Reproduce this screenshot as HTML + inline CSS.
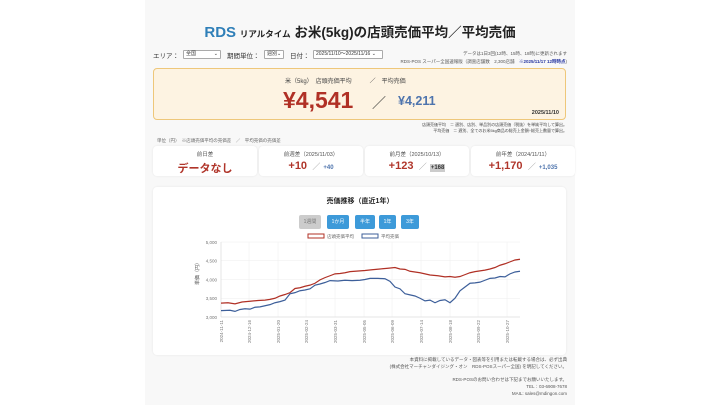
<!DOCTYPE html><html><head><meta charset="utf-8"><style>
*{margin:0;padding:0;box-sizing:border-box}
body{width:720px;height:405px;background:#fff;font-family:"Liberation Sans","Noto Sans CJK JP",sans-serif;position:relative;overflow:hidden;color:#333}
.col{position:absolute;left:145px;top:0;width:430px;height:405px;background:#f8f8f8}
.a{position:absolute;white-space:nowrap}
.sel{position:absolute;height:9px;border:1px solid #aaa;background:#fff;font-size:5px;line-height:7px;padding-left:2px;border-radius:1px}
.card{position:absolute;top:146px;width:104px;height:30px;background:#fff;border-radius:4px;box-shadow:0 0 2px rgba(0,0,0,.08);text-align:center}
.card .t{font-size:5.5px;color:#555;margin-top:4px}
.card .v{font-size:11px;font-weight:bold;color:#b0352a;margin-top:2px}
.btn{position:absolute;top:215px;height:14px;border-radius:2px;background:#3d9ad9;color:#fff;font-size:5px;line-height:14px;text-align:center}
</style></head><body>
<div class="col"></div>
<div class="a" style="left:0;width:720px;top:21px;text-align:center;font-size:13.5px;font-weight:bold;color:#222"><span style="color:#2f7fb8;font-size:15px">RDS</span> <span style="font-size:8.5px">リアルタイム</span> お米(5kg)の店頭売価平均／平均売価</div>
<div class="a" style="left:153px;top:50px;font-size:6.5px;color:#333">エリア：</div>
<div class="sel" style="left:183px;top:50px;width:38px">全国 <span style="float:right;padding-right:2px">⌄</span></div>
<div class="a" style="left:227px;top:50px;font-size:6.5px">期間単位：</div>
<div class="sel" style="left:264px;top:50px;width:20px">週別⌄</div>
<div class="a" style="left:290px;top:50px;font-size:6.5px">日付：</div>
<div class="sel" style="left:313px;top:50px;width:70px">2025/11/10～2025/11/16 ⌄</div>
<div class="a" style="right:153px;top:51px;font-size:4.5px;color:#555">データは1日3回(12時、15時、18時)に更新されます</div>
<div class="a" style="right:153px;top:59px;font-size:4.5px;color:#555">RDS-POS スーパー全国速報版（調査店舗数　2,300店舗　<b style="color:#2535a0">※2025/11/17 12時時点</b>)</div>
<div class="a" style="left:153px;top:68px;width:413px;height:52px;background:#fdf3e2;border:1px solid #eec77a;border-radius:4px"></div>
<div class="a" style="left:285px;top:76px;font-size:6px;color:#444">米（5kg）　店頭売価平均　　　／　平均売価</div>
<div class="a" style="left:283px;top:87px;font-size:23px;font-weight:bold;color:#b03025">¥4,541</div>
<div class="a" style="left:372px;top:93px;font-size:14px;color:#333">／</div>
<div class="a" style="left:398px;top:94px;font-size:12.5px;font-weight:bold;color:#4e74ad">¥4,211</div>
<div class="a" style="right:161px;top:110px;font-size:5.5px;font-weight:bold;color:#333">2025/11/10</div>
<div class="a" style="right:153px;top:122px;font-size:4px;color:#444;text-align:right;line-height:6px">店頭売価平均　＝ 週別、店別、単品別の店頭売価（税抜）を単純平均して算出。<br>平均売価　＝ 週別、全てのお米5kg商品の総売上金額÷総売上数量で算出。</div>
<div class="a" style="left:157px;top:138px;font-size:4.5px;color:#666">単位（円）　※店頭売価平均の売価差　／　平均売価の売価差</div>
<div class="card" style="left:153px"><div class="t">前日差</div><div class="v">データなし</div></div>
<div class="card" style="left:259px"><div class="t">前週差（2025/11/03）</div><div class="v">+10 <span style="font-weight:normal;color:#999;font-size:8px">&nbsp;／</span> <span style="font-size:6px;color:#4e74ad">+40</span></div></div>
<div class="card" style="left:365px"><div class="t">前月差（2025/10/13）</div><div class="v">+123 <span style="font-weight:normal;color:#999;font-size:8px">&nbsp;／</span> <span style="font-size:6px;color:#333;background:#ccc;padding:1px">+168</span></div></div>
<div class="card" style="left:471px"><div class="t">前年差（2024/11/11）</div><div class="v">+1,170 <span style="font-weight:normal;color:#999;font-size:8px">&nbsp;／</span> <span style="font-size:6px;color:#4e74ad">+1,035</span></div></div>
<div class="a" style="left:153px;top:187px;width:413px;height:168px;background:#fff;border-radius:4px;box-shadow:0 0 2px rgba(0,0,0,.08)"></div>
<div class="a" style="left:0;width:720px;top:196px;text-align:center;font-size:7px;font-weight:bold;color:#222">売価推移（直近1年）</div>
<div class="btn" style="left:299px;width:22px;background:#ccc;color:#777">1週間</div>
<div class="btn" style="left:327px;width:22px">1か月</div>
<div class="btn" style="left:355px;width:20px">半年</div>
<div class="btn" style="left:379px;width:17px">1年</div>
<div class="btn" style="left:401px;width:18px">3年</div>
<svg class="a" style="left:0;top:0" width="720" height="405">
<rect x="308" y="234" width="16" height="4" fill="#fff" stroke="#b03025" stroke-width="1"/>
<text x="327" y="238" font-size="4.5" fill="#666">店頭売価平均</text>
<rect x="362" y="234" width="16" height="4" fill="#fff" stroke="#3d5f9a" stroke-width="1"/>
<text x="381" y="238" font-size="4.5" fill="#666">平均売価</text>
<g stroke="#eee" stroke-width=".5">
<line x1="221" y1="242" x2="520" y2="242"/><line x1="221" y1="260.75" x2="520" y2="260.75"/><line x1="221" y1="279.5" x2="520" y2="279.5"/><line x1="221" y1="298.25" x2="520" y2="298.25"/>
<line x1="249" y1="242" x2="249" y2="317"/><line x1="278" y1="242" x2="278" y2="317"/><line x1="306" y1="242" x2="306" y2="317"/><line x1="335" y1="242" x2="335" y2="317"/><line x1="364" y1="242" x2="364" y2="317"/><line x1="392" y1="242" x2="392" y2="317"/><line x1="421" y1="242" x2="421" y2="317"/><line x1="450" y1="242" x2="450" y2="317"/><line x1="478" y1="242" x2="478" y2="317"/><line x1="507" y1="242" x2="507" y2="317"/>
</g>
<line x1="221" y1="317" x2="520" y2="317" stroke="#ccc" stroke-width=".5"/>
<line x1="221" y1="242" x2="221" y2="317" stroke="#ccc" stroke-width=".5"/>
<g font-size="4.5" fill="#777" text-anchor="end">
<text x="217" y="244">5,000</text><text x="217" y="262.5">4,500</text><text x="217" y="281.5">4,000</text><text x="217" y="300">3,500</text><text x="217" y="319">3,000</text>
</g>
<text transform="translate(199,285) rotate(-90)" font-size="5" fill="#555">単価（円）</text>
<g font-size="4.5" fill="#777" text-anchor="end">
<text transform="translate(223,320) rotate(-90)">2024-11-11</text>
<text transform="translate(251,320) rotate(-90)">2024-12-16</text>
<text transform="translate(280,320) rotate(-90)">2025-01-20</text>
<text transform="translate(308,320) rotate(-90)">2025-02-24</text>
<text transform="translate(337,320) rotate(-90)">2025-03-31</text>
<text transform="translate(366,320) rotate(-90)">2025-05-05</text>
<text transform="translate(394,320) rotate(-90)">2025-06-09</text>
<text transform="translate(423,320) rotate(-90)">2025-07-14</text>
<text transform="translate(452,320) rotate(-90)">2025-08-18</text>
<text transform="translate(480,320) rotate(-90)">2025-09-22</text>
<text transform="translate(509,320) rotate(-90)">2025-10-27</text>
</g>
<g transform="translate(0,317) scale(1,-0.0375) translate(0,-3000)" fill="none" stroke-width="1.2">
<polyline vector-effect="non-scaling-stroke" stroke="#b03025" points="221,3370 228,3380 235,3350 242,3400 250,3420 258,3440 265,3450 270,3470 275,3500 280,3560 285,3600 290,3650 295,3760 300,3780 305,3820 310,3850 315,3900 320,3990 325,4050 330,4100 335,4150 340,4160 345,4180 350,4210 355,4220 360,4230 365,4240 372,4260 380,4280 388,4300 395,4320 400,4280 405,4270 410,4220 415,4200 420,4180 425,4150 430,4120 438,4100 445,4070 450,4080 455,4060 460,4080 465,4130 470,4180 475,4210 480,4230 485,4250 490,4280 495,4320 500,4380 505,4420 510,4470 515,4520 520,4540"/>
<polyline vector-effect="non-scaling-stroke" stroke="#3d5f9a" points="221,3170 230,3180 235,3150 240,3200 245,3220 250,3210 255,3260 260,3270 265,3300 270,3330 275,3380 280,3410 285,3450 290,3620 295,3650 300,3700 305,3720 310,3750 315,3850 320,3880 325,3920 330,3970 338,3960 345,3980 352,3970 360,3980 365,4000 370,4030 378,4030 385,4020 390,3950 395,3800 400,3750 405,3620 410,3590 415,3560 420,3500 425,3430 430,3450 435,3380 440,3440 445,3460 450,3380 455,3500 460,3700 465,3800 470,3900 475,3910 480,3930 485,3980 490,4030 495,4040 500,4080 505,4070 510,4150 515,4200 520,4220"/>
</g>
</svg>
<div class="a" style="right:153px;top:356px;font-size:4.5px;color:#555;text-align:right;line-height:7px">本資料に掲載しているデータ・図表等を引用または転載する場合は、必ず出典<br>(株式会社マーチャンダイジング・オン　RDS-POSスーパー全国) を明記してください。</div>
<div class="a" style="right:153px;top:376px;font-size:4.5px;color:#555;text-align:right;line-height:7px">RDS-POSのお問い合わせは下記までお願いいたします。<br>TEL：03-6908-7678<br>MAIL: sales@mdingon.com</div>
</body></html>
